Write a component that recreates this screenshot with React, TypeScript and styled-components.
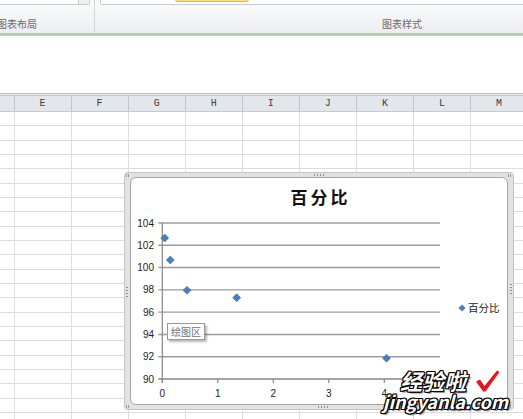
import styled, { createGlobalStyle } from 'styled-components';

const GlobalStyle = createGlobalStyle`
  html, body {
    margin: 0;
    padding: 0;
    background: #fff;
    overflow: hidden;
  }
  body {
    font-family: "Liberation Sans", "Noto Sans CJK SC", sans-serif;
  }
`;

const COLUMNS = ['', 'E', 'F', 'G', 'H', 'I', 'J', 'K', 'L', 'M'];
const ROW_COUNT = 22;
const GRID_COLS = '14.5px repeat(9, 57.07px)';

// plot scale (svg coords)
const X0 = 31.3;
const X_UNIT = 55.5;
const Y_TOP = 16;
const Y_UNIT = 11.143;
const xPos = (v: number) => X0 + v * X_UNIT;
const yPos = (v: number) => Y_TOP + (104 - v) * Y_UNIT;

const points: [number, number][] = [
  [0.043, 102.65],
  [0.144, 100.68],
  [0.445, 97.96],
  [1.34, 97.3],
  [4.04, 91.87],
];
const yTicks = [104, 102, 100, 98, 96, 94, 92, 90];
const xTicks = [0, 1, 2, 3, 4];

const diamond = (x: number, y: number, r = 4) =>
  `M${x} ${y - r}L${x + r} ${y}L${x} ${y + r}L${x - r} ${y}Z`;

const Page = styled.div`
  position: relative;
  width: 523px;
  height: 419px;
  overflow: hidden;
  display: flex;
  flex-direction: column;
`;

/* ---------- ribbon ---------- */

const Ribbon = styled.div`
  display: flex;
  height: 33px;
  flex-shrink: 0;
  background: linear-gradient(#fcfcfd, #eceef2);
  border-bottom: 2px solid #a8d49e;
  overflow: hidden;
`;

const Group = styled.div<{ $w: number; $last?: boolean }>`
  flex: 0 0 ${({ $w }) => $w}px;
  display: flex;
  flex-direction: column;
  border-right: ${({ $last }) => ($last ? 'none' : '1px solid #d0d8d0')};
`;

const Gallery = styled.div<{ $ml: number; $w?: number }>`
  position: relative;
  height: 4px;
  margin-left: ${({ $ml }) => $ml}px;
  width: ${({ $w }) => ($w ? `${$w}px` : 'auto')};
  background: #fff;
  border: 1px solid #c8ccd2;
  border-top: none;
  border-radius: 0 0 2px 2px;
  display: flex;
  justify-content: flex-end;
`;

const ScrollBtn = styled.div`
  width: 10px;
  height: 100%;
  border-left: 1px solid #c8ccd2;
  background: #eef0f3;
`;

const StyleChip = styled.div`
  position: absolute;
  left: 74px;
  top: -1px;
  width: 72px;
  height: 2px;
  background: #fde27c;
  border: 1px solid #e2b94e;
  border-top: none;
  border-radius: 0 0 3px 3px;
`;

const GroupLabel = styled.div<{ $center?: boolean; $ml?: number }>`
  flex: 1;
  display: flex;
  align-items: flex-end;
  justify-content: ${({ $center }) => ($center ? 'center' : 'flex-start')};
  margin-left: ${({ $ml }) => $ml ?? 0}px;
  padding-bottom: 2px;
  font-family: "Noto Sans CJK SC", sans-serif;
  font-size: 10px;
  line-height: 14px;
  color: #6b6b6b;
`;

const RuleLine = styled.div`
  height: 1px;
  flex-shrink: 0;
  background: #c8ccd1;
`;

const FormulaArea = styled.div`
  height: 57px;
  flex-shrink: 0;
  background: #fff;
  border-bottom: 1px solid #b8bdc4;
`;

const Spacer = styled.div`
  height: 1px;
  flex-shrink: 0;
  background: #eef0f2;
`;

/* ---------- sheet ---------- */

const Sheet = styled.div`
  position: relative;
  flex: 1;
`;

const HeaderRow = styled.div`
  display: grid;
  grid-template-columns: ${GRID_COLS};
  height: 17px;
  box-sizing: border-box;
  background: #e3e6ea;
  border-top: 1px solid #bfc4ca;
  border-bottom: 1px solid #c6cad0;
`;

const HeaderCell = styled.div`
  border-right: 1px solid #c2c6cc;
  text-align: center;
  font-family: "Liberation Mono", monospace;
  font-size: 10px;
  line-height: 15px;
  color: #3d3d3d;
`;

const Row = styled.div`
  display: grid;
  grid-template-columns: ${GRID_COLS};
  height: 14.33px;
  box-sizing: border-box;
  border-bottom: 1px solid #dcdcdc;
`;

const Cell = styled.div`
  border-right: 1px solid #dedede;
`;

/* ---------- chart ---------- */

const ChartFrame = styled.div`
  position: absolute;
  left: 124px;
  top: 77px;
  width: 390px;
  height: 238px;
  box-sizing: border-box;
  padding: 4px 5px;
  border: 1px solid #c4c4c4;
  border-radius: 4px;
  background: #e2e2e2;
`;

const Grip = styled.span<{ $v?: boolean }>`
  position: absolute;
  width: ${({ $v }) => ($v ? '2px' : '12px')};
  height: ${({ $v }) => ($v ? '12px' : '2px')};
  background: ${({ $v }) =>
    $v
      ? 'repeating-linear-gradient(180deg, #8f8f8f 0 1px, transparent 1px 3px)'
      : 'repeating-linear-gradient(90deg, #8f8f8f 0 1px, transparent 1px 3px)'};
`;

const CornerGrip = styled.span`
  position: absolute;
  width: 4px;
  height: 3px;
  background: repeating-linear-gradient(90deg, #9a9a9a 0 1px, transparent 1px 2px);
`;

const ChartInner = styled.div`
  position: relative;
  width: 378px;
  height: 228px;
  box-sizing: border-box;
  background: #fff;
  border: 1px solid #a4a4a4;
  border-radius: 6px;
  display: flex;
  flex-direction: column;
`;

const ChartTitle = styled.div`
  height: 29px;
  box-sizing: border-box;
  padding: 9px 0 0 3px;
  text-align: center;
  font-family: "Noto Sans CJK SC", sans-serif;
  font-weight: 700;
  font-size: 17px;
  line-height: 20px;
  letter-spacing: 3px;
  color: #111;
`;

const PlotRow = styled.div`
  display: flex;
  height: 197px;
`;

const Plot = styled.svg`
  display: block;
  flex-shrink: 0;
`;

const Legend = styled.div`
  display: flex;
  align-items: center;
  gap: 2px;
  align-self: center;
  margin: 5px 0 0 7px;
  font-family: "Noto Sans CJK SC", sans-serif;
  font-size: 10.5px;
  line-height: 12px;
  color: #222;
`;

const Tip = styled.div`
  position: absolute;
  left: 36px;
  top: 145px;
  height: 17px;
  box-sizing: border-box;
  padding: 0 3px;
  background: #fff;
  border: 1px solid #9a9a9a;
  box-shadow: 2px 2px 2px rgba(0, 0, 0, 0.28);
  font-family: "Noto Sans CJK SC", sans-serif;
  font-size: 10px;
  line-height: 15px;
  color: #707070;
`;

/* ---------- watermark ---------- */

const Watermark = styled.div`
  position: absolute;
  left: 382px;
  top: 369px;
  display: flex;
  flex-direction: column;
  align-items: flex-start;
  pointer-events: none;
`;

const outline = `
  -1px -1px 0 #000, 1px -1px 0 #000, -1px 1px 0 #000, 1px 1px 0 #000,
  0 -1px 0 #000, 0 1px 0 #000, -1px 0 0 #000, 1px 0 0 #000,
  2px 2px 1px rgba(0, 0, 0, 0.45)
`;

const MarkLine = styled.div<{ $size: number; $ml: number }>`
  display: flex;
  align-items: center;
  margin-left: ${({ $ml }) => $ml}px;
  font-family: "Noto Sans CJK SC", "Liberation Sans", sans-serif;
  font-weight: 700;
  font-style: italic;
  font-size: ${({ $size }) => $size}px;
  line-height: ${({ $size }) => $size + 1}px;
  color: #fff;
  text-shadow: ${outline};
`;

const Check = styled.svg`
  margin-left: 8px;
`;

export default function App() {
  return (
    <>
      <GlobalStyle />
      <Page>
        <Ribbon>
          <Group $w={94}>
            <Gallery $ml={-2} $w={90}>
              <ScrollBtn />
            </Gallery>
            <GroupLabel $ml={-3}>图表布局</GroupLabel>
          </Group>
          <Group $w={614} $last>
            <Gallery $ml={5}>
              <StyleChip />
            </Gallery>
            <GroupLabel $center>图表样式</GroupLabel>
          </Group>
        </Ribbon>
        <RuleLine />
        <FormulaArea />
        <Spacer />
        <Sheet>
          <HeaderRow>
            {COLUMNS.map((c, i) => (
              <HeaderCell key={i}>{c}</HeaderCell>
            ))}
          </HeaderRow>
          {Array.from({ length: ROW_COUNT }).map((_, r) => (
            <Row key={r}>
              {COLUMNS.map((_, c) => (
                <Cell key={c} />
              ))}
            </Row>
          ))}

          <ChartFrame>
            <CornerGrip style={{ left: 1, top: 1 }} />
            <CornerGrip style={{ right: 1, top: 1 }} />
            <CornerGrip style={{ left: 1, bottom: 1 }} />
            <CornerGrip style={{ right: 1, bottom: 1 }} />
            <Grip style={{ left: 189, top: 1 }} />
            <Grip style={{ left: 193, bottom: 1 }} />
            <Grip $v style={{ left: 1, top: 114 }} />
            <Grip $v style={{ right: 1, top: 111 }} />

            <ChartInner>
              <ChartTitle>百分比</ChartTitle>
              <PlotRow>
                <Plot width={320} height={197} viewBox="0 0 320 197">
                  {yTicks.map((t) => (
                    <g key={t}>
                      <line
                        x1={X0 - 4}
                        x2={309}
                        y1={yPos(t)}
                        y2={yPos(t)}
                        stroke={t === 90 ? '#868686' : '#9c9c9c'}
                        strokeWidth={1.4}
                      />
                      <text
                        x={23}
                        y={yPos(t) + 3.5}
                        textAnchor="end"
                        fontFamily="Liberation Sans, sans-serif"
                        fontSize={10}
                        fill="#222"
                      >
                        {t}
                      </text>
                    </g>
                  ))}
                  <line x1={X0} x2={X0} y1={yPos(104)} y2={yPos(90) + 4} stroke="#868686" strokeWidth={1.2} />
                  {xTicks.map((t) => (
                    <g key={t}>
                      <line x1={xPos(t)} x2={xPos(t)} y1={yPos(90)} y2={yPos(90) + 4} stroke="#868686" strokeWidth={1.2} />
                      <text
                        x={xPos(t)}
                        y={189.5}
                        textAnchor="middle"
                        fontFamily="Liberation Sans, sans-serif"
                        fontSize={10}
                        fill="#222"
                      >
                        {t}
                      </text>
                    </g>
                  ))}
                  {points.map(([x, y], i) => (
                    <path key={i} d={diamond(xPos(x), yPos(y))} fill="#4a7ebb" stroke="#3f6fa9" strokeWidth={0.6} />
                  ))}
                </Plot>
                <Legend>
                  <svg width={8} height={8} viewBox="0 0 8 8">
                    <path d={diamond(4, 4, 3.6)} fill="#4a7ebb" />
                  </svg>
                  百分比
                </Legend>
              </PlotRow>
              <Tip>绘图区</Tip>
            </ChartInner>
          </ChartFrame>
        </Sheet>

        <Watermark>
          <MarkLine $size={22} $ml={18}>
            经验啦
            <Check width={26} height={22} viewBox="0 0 26 22">
              <path d="M2 11.5L6 9.5L10.5 16L23 0.5L25.5 2L11.5 21.5L9.2 21.5Z" fill="#e8141b" />
            </Check>
          </MarkLine>
          <MarkLine $size={18} $ml={1}>
            jingyanla.com
          </MarkLine>
        </Watermark>
      </Page>
    </>
  );
}
